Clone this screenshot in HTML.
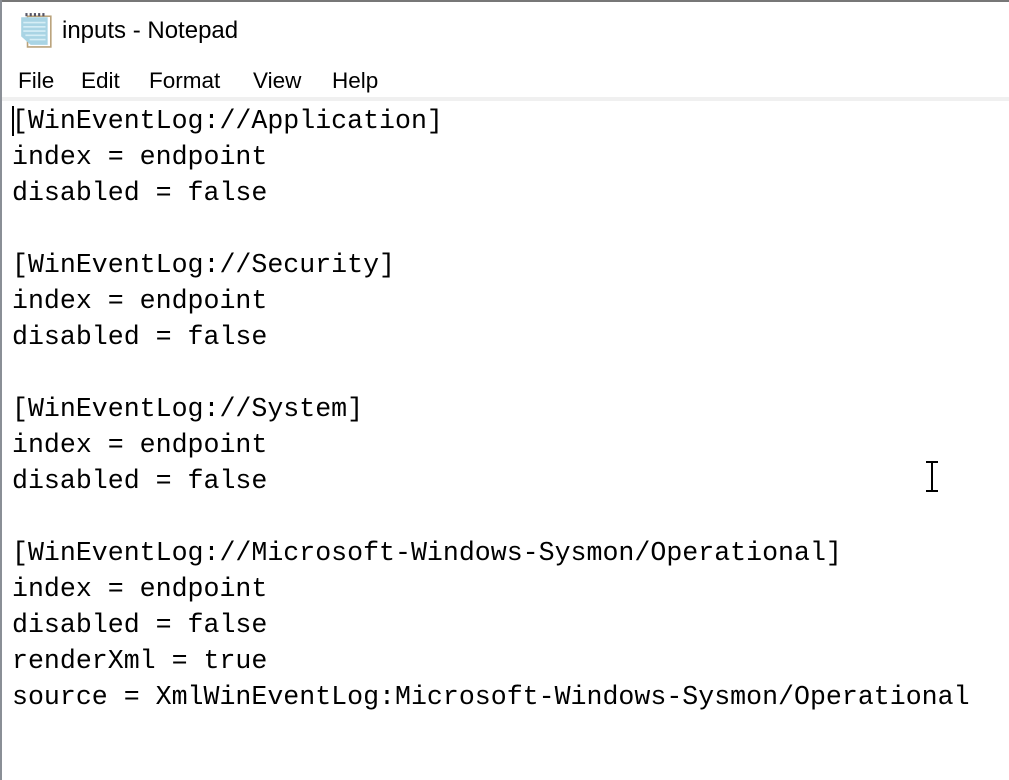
<!DOCTYPE html>
<html><head><meta charset="utf-8"><style>
html,body{margin:0;padding:0;background:#fff;width:1009px;height:780px;overflow:hidden;position:relative}
.lb{position:absolute;left:0;top:0;width:2px;height:780px;background:#8a8f96}
.top{position:absolute;left:0;top:0;width:1009px;height:2px;background:#777}
.title{position:absolute;left:62px;top:17px;font:24px "Liberation Sans",sans-serif;color:#000}
.menu{position:absolute;top:68px;font:22.5px "Liberation Sans",sans-serif;color:#000}
.sep{position:absolute;left:2px;top:97px;width:1007px;height:4px;background:#f0f0f0}
pre{position:absolute;left:12px;top:103px;margin:0;font:26.6px/36px "Liberation Mono",monospace;color:#000}
.caret{position:absolute;left:12px;top:106px;width:2px;height:30px;background:#000}
</style></head><body>
<div class="top"></div><div class="lb"></div>
<svg style="position:absolute;left:19px;top:12px" width="34" height="36" viewBox="0 0 32 34">
<rect x="8" y="4" width="22" height="29" fill="#fff" stroke="#b9a27a" stroke-width="1.5"/>
<polygon points="2,5 27,5 27,31 11,31 2,23" fill="#a9d4e4"/>
<g stroke="#d6eef6" stroke-width="1.5"><line x1="4" y1="10" x2="25" y2="10"/><line x1="4" y1="14" x2="25" y2="14"/><line x1="4" y1="18" x2="25" y2="18"/><line x1="6" y1="22" x2="25" y2="22"/><line x1="10" y1="26" x2="25" y2="26"/></g>
<g fill="#556"><rect x="6" y="1" width="2" height="3"/><rect x="10" y="1" width="2" height="3"/><rect x="14" y="1" width="2" height="3"/><rect x="18" y="1" width="2" height="3"/><rect x="22" y="1" width="2" height="3"/></g>
</svg>
<div class="title">inputs - Notepad</div>
<div class="menu" style="left:18px">File</div>
<div class="menu" style="left:81px">Edit</div>
<div class="menu" style="left:149px">Format</div>
<div class="menu" style="left:253px">View</div>
<div class="menu" style="left:332px">Help</div>
<div class="sep"></div>
<div class="caret"></div>
<pre>[WinEventLog://Application]
index = endpoint
disabled = false

[WinEventLog://Security]
index = endpoint
disabled = false

[WinEventLog://System]
index = endpoint
disabled = false

[WinEventLog://Microsoft-Windows-Sysmon/Operational]
index = endpoint
disabled = false
renderXml = true
source = XmlWinEventLog:Microsoft-Windows-Sysmon/Operational</pre>
<svg style="position:absolute;left:924px;top:461px" width="16" height="32"><g stroke="#000" stroke-width="2"><line x1="2" y1="1" x2="14" y2="1"/><line x1="8" y1="1" x2="8" y2="30"/><line x1="2" y1="30" x2="14" y2="30"/></g></svg>
</body></html>
